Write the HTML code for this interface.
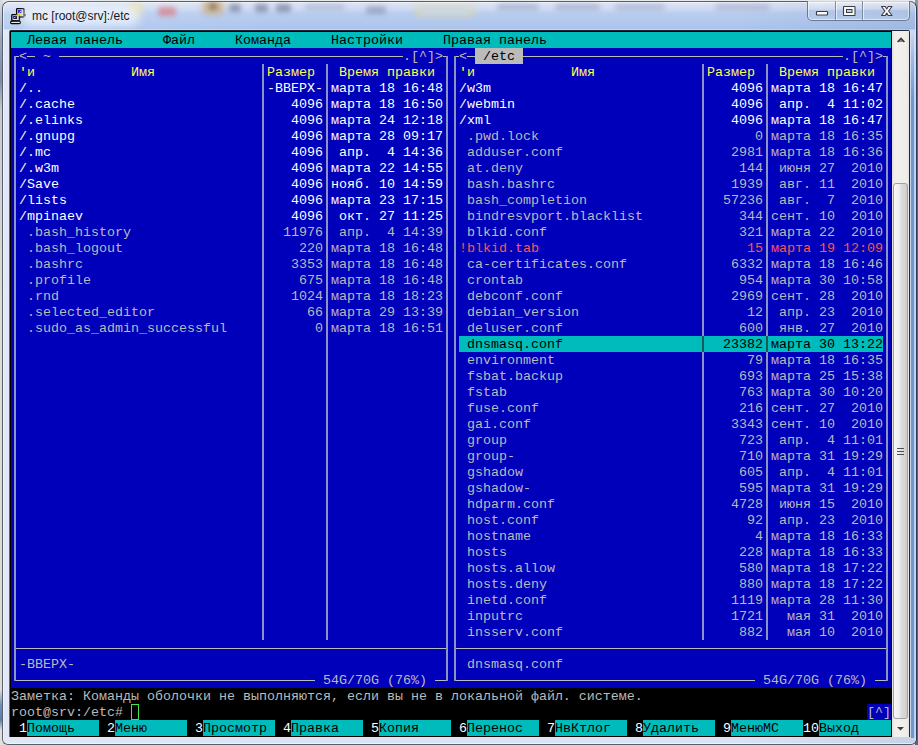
<!DOCTYPE html>
<html><head><meta charset="utf-8"><style>
html,body{margin:0;padding:0;width:918px;height:745px;overflow:hidden;position:relative;background:#e2e2da}
#bgl{position:absolute;left:0;top:0;width:3px;height:745px;background:linear-gradient(#d9dde4 0,#9aa6b8 40px,#7d8ca4 80px,#c8ccc8 110px,#dcdcd2 300px,#dcdcd2 690px,#6f8fb8 705px,#5f7fa8 720px,#e0e0d8 730px)}
#bgr{position:absolute;left:915px;top:0;width:3px;height:745px;background:linear-gradient(#8a96a8,#506890 60px,#506890)}
#bgt{position:absolute;left:0;top:0;width:918px;height:2px;background:#e6e8ec}
#win{position:absolute;left:2px;top:1px;width:913px;height:742px;border:1px solid #565f70;border-right-color:#2a3a58;border-radius:7px 7px 6px 6px;overflow:hidden;
 background:linear-gradient(90deg,rgba(255,255,255,0.15),rgba(255,255,255,0) 30%,rgba(255,255,255,0) 80%,rgba(60,90,140,0.12)),linear-gradient(#dfe6f6 0,#d0dcf2 6px,#b9cdef 12px,#b0c8ee 22px,#aac4ec 27px,#dde6f6 28px,#dde2f8 40px,#dee3f8 700px,#dbe3f2 742px)}
#win .hl{position:absolute;left:0;top:0;right:0;bottom:0;border:1px solid rgba(255,255,255,0.55);border-radius:6px 6px 3px 3px}
#title{position:absolute;left:32px;top:8px;font-family:"Liberation Sans",sans-serif;font-size:12px;line-height:16px;color:#141828;white-space:pre}
#icon{position:absolute;left:8px;top:6px;width:20px;height:20px}
#cbar{position:absolute;left:807px;top:1px;width:101px;height:19px;border:1px solid #6a7a90;border-top:none;border-radius:0 0 5px 5px;overflow:hidden;
 background:linear-gradient(rgba(255,255,255,0.45),rgba(255,255,255,0.15) 45%,rgba(160,185,220,0.25) 50%,rgba(200,220,245,0.4));box-shadow:inset 0 0 0 1px rgba(255,255,255,0.5)}
#cbar .d1{position:absolute;left:27px;top:0;width:1px;height:19px;background:#7d8ca2;box-shadow:1px 0 0 rgba(255,255,255,0.6)}
#cbar .d2{position:absolute;left:54px;top:0;width:1px;height:19px;background:#7d8ca2;box-shadow:1px 0 0 rgba(255,255,255,0.6)}
#cbar svg{position:absolute;left:0;top:0}
#cborder{position:absolute;left:9px;top:30px;width:901px;height:707px;background:linear-gradient(90deg,#566868 0,#566868 1px,#202838 1px);border-radius:2px 2px 0 0}
#client{position:absolute;left:10px;top:31px;width:882px;height:706px;background:#000}
#sb{position:absolute;left:892px;top:31px;width:17px;height:706px;background:linear-gradient(90deg,#e4e2de,#f2f0ec 3px,#f0eeea 14px,#e6e4e0)}
#thumb{position:absolute;left:1px;top:152px;width:13px;height:534px;border:1px solid #a2a2a2;border-radius:3px;background:linear-gradient(90deg,#f6f6f6,#eeeeee 40%,#dcdcdc 55%,#d4d4d4 85%,#c8c8c8)}
#sb svg{position:absolute;left:0}
#term{position:absolute;left:0;top:0}
#cur{position:absolute;left:131px;top:704px;width:6px;height:14px;border:1px solid #44e844}
#frR{position:absolute;left:910px;top:30px;width:6px;height:708px;background:linear-gradient(rgba(215,225,245,0.9),rgba(215,225,245,0.5) 25px,rgba(215,225,245,0) 70px),linear-gradient(90deg,#c4d4f0 0,#c4d4f0 1px,#7898c8 1px,#7094c8 4px,#b8d0f8 4px,#c0d8ff 6px)}

.b{position:absolute;height:16px}
.l{position:absolute}
.t{position:absolute;height:16px;line-height:16px;white-space:pre;font-family:"Liberation Mono",monospace;font-size:13.333px}
</style></head><body>
<div id="bgt"></div><div id="bgl"></div><div id="bgr"></div>
<div id="win"><div class="hl"></div><div id="blobs" style="position:absolute;left:-3px;top:-1px;width:918px;height:28px;overflow:hidden"><div style="position:absolute;left:128px;top:3px;width:14px;height:10px;background:rgba(235,225,150,0.8);filter:blur(3px);border-radius:3px"></div><div style="position:absolute;left:158px;top:6px;width:18px;height:9px;background:rgba(220,120,130,0.7);filter:blur(2.5px);border-radius:3px"></div><div style="position:absolute;left:203px;top:0px;width:20px;height:13px;background:rgba(205,160,100,0.7);filter:blur(3px);border-radius:3px"></div><div style="position:absolute;left:209px;top:2px;width:8px;height:7px;background:rgba(110,110,90,0.6);filter:blur(2px);border-radius:3px"></div><div style="position:absolute;left:229px;top:3px;width:12px;height:8px;background:rgba(90,100,130,0.55);filter:blur(2.5px);border-radius:3px"></div><div style="position:absolute;left:255px;top:3px;width:13px;height:8px;background:rgba(90,100,130,0.55);filter:blur(2.5px);border-radius:3px"></div><div style="position:absolute;left:276px;top:3px;width:15px;height:8px;background:rgba(90,100,130,0.55);filter:blur(2.5px);border-radius:3px"></div><div style="position:absolute;left:305px;top:3px;width:40px;height:6px;background:rgba(130,140,170,0.35);filter:blur(2.5px);border-radius:3px"></div><div style="position:absolute;left:366px;top:5px;width:20px;height:8px;background:rgba(110,120,150,0.45);filter:blur(2.5px);border-radius:3px"></div><div style="position:absolute;left:415px;top:4px;width:60px;height:12px;background:rgba(230,215,150,0.5);filter:blur(3px);border-radius:3px"></div><div style="position:absolute;left:420px;top:7px;width:50px;height:6px;background:rgba(200,215,240,0.8);filter:blur(2px);border-radius:3px"></div><div style="position:absolute;left:497px;top:3px;width:42px;height:6px;background:rgba(120,130,170,0.4);filter:blur(2.5px);border-radius:3px"></div><div style="position:absolute;left:555px;top:3px;width:45px;height:6px;background:rgba(120,130,170,0.4);filter:blur(2.5px);border-radius:3px"></div><div style="position:absolute;left:615px;top:3px;width:50px;height:6px;background:rgba(120,130,170,0.35);filter:blur(2.5px);border-radius:3px"></div><div style="position:absolute;left:715px;top:3px;width:55px;height:6px;background:rgba(120,130,170,0.35);filter:blur(2.5px);border-radius:3px"></div></div></div>
<svg id="icon" viewBox="0 0 20 20" width="20" height="20">
 <rect x="8.6" y="2.6" width="7.4" height="8.4" rx="0.8" fill="#d4d4d4" stroke="#000" stroke-width="1.3"/>
 <rect x="10" y="4" width="3.4" height="3" fill="#1818d0"/>
 <path d="M11.5 6.5 L13 5" stroke="#fff" stroke-width="0.8"/>
 <rect x="16" y="8" width="1.8" height="2.2" fill="#000"/>
 <rect x="3.8" y="8.6" width="7.6" height="6.4" rx="0.8" fill="#d8d8d8" stroke="#000" stroke-width="1.3"/>
 <rect x="5.2" y="10" width="3.8" height="3" fill="#101060"/>
 <path d="M6 12.3 L7.5 10.8" stroke="#fff" stroke-width="0.9"/>
 <rect x="2.6" y="15.2" width="9.8" height="2.4" rx="1.2" fill="#ececec" stroke="#000" stroke-width="1.2"/>
 <path d="M8.2 9.2 L11.6 7.2 L11 8.6 L13.2 8.4 L9.6 10.8 L10.3 9.6 Z" fill="#f8f000" stroke="#d0c800" stroke-width="0.5"/>
</svg>
<div style="position:absolute;left:22px;top:6px;width:118px;height:20px;border-radius:10px;background:rgba(240,244,252,0.75);filter:blur(4px)"></div>
<div id="title">mc [root@srv]:/etc</div>
<div id="cbar"><div class="d1"></div><div class="d2"></div>
<svg width="101" height="19" viewBox="0 0 101 19">
 <rect x="8.5" y="10.5" width="11" height="3.5" fill="#fff" stroke="#3c3c46" stroke-width="1.2" rx="0.5"/>
 <rect x="35.5" y="5.5" width="11.5" height="9" fill="#f8f8f8" stroke="#3c3c46" stroke-width="1.1" rx="0.5"/>
 <rect x="38.5" y="8.5" width="5.5" height="3" fill="#c4d2e8" stroke="#3c3c46" stroke-width="1"/>
 <path d="M73.5 5.5 L77.3 5.5 L78.75 8 L80.2 5.5 L84 5.5 L80.6 10 L84 14.5 L80.2 14.5 L78.75 12 L77.3 14.5 L73.5 14.5 L76.9 10 Z" fill="#fafafa" stroke="#3c3c46" stroke-width="1.1" stroke-linejoin="round"/>
</svg></div>
<div id="frR"></div>
<div id="cborder"></div>
<div id="client"></div>
<div id="sb">
 <svg width="17" height="17" style="top:0"><path d="M5.6 11 L9 7.4 L12.4 11" fill="#888" stroke="#3a3a3a" stroke-width="1.5" stroke-linejoin="miter"/></svg>
 <div id="thumb"><div style="position:absolute;left:3px;top:264px;width:7px;height:1px;background:#505050;box-shadow:0 3px 0 #505050,0 6px 0 #505050"></div></div>
 <svg width="17" height="18" style="top:688px"><path d="M5 8 L8.5 11.5 L12 8 Z" fill="#404040"/></svg>
</div>

<div id="term">
<div class="b" style="left:11px;top:32px;width:880px;background:#00bbbb"></div>
<div class="b" style="left:11px;top:48px;width:464px;background:#0000bb"></div>
<div class="b" style="left:475px;top:48px;width:48px;background:#bbbbbb"></div>
<div class="b" style="left:523px;top:48px;width:368px;background:#0000bb"></div>
<div class="b" style="left:11px;top:64px;width:880px;background:#0000bb"></div>
<div class="b" style="left:11px;top:80px;width:880px;background:#0000bb"></div>
<div class="b" style="left:11px;top:96px;width:880px;background:#0000bb"></div>
<div class="b" style="left:11px;top:112px;width:880px;background:#0000bb"></div>
<div class="b" style="left:11px;top:128px;width:880px;background:#0000bb"></div>
<div class="b" style="left:11px;top:144px;width:880px;background:#0000bb"></div>
<div class="b" style="left:11px;top:160px;width:880px;background:#0000bb"></div>
<div class="b" style="left:11px;top:176px;width:880px;background:#0000bb"></div>
<div class="b" style="left:11px;top:192px;width:880px;background:#0000bb"></div>
<div class="b" style="left:11px;top:208px;width:880px;background:#0000bb"></div>
<div class="b" style="left:11px;top:224px;width:880px;background:#0000bb"></div>
<div class="b" style="left:11px;top:240px;width:880px;background:#0000bb"></div>
<div class="b" style="left:11px;top:256px;width:880px;background:#0000bb"></div>
<div class="b" style="left:11px;top:272px;width:880px;background:#0000bb"></div>
<div class="b" style="left:11px;top:288px;width:880px;background:#0000bb"></div>
<div class="b" style="left:11px;top:304px;width:880px;background:#0000bb"></div>
<div class="b" style="left:11px;top:320px;width:880px;background:#0000bb"></div>
<div class="b" style="left:11px;top:336px;width:448px;background:#0000bb"></div>
<div class="b" style="left:459px;top:336px;width:424px;background:#00bbbb"></div>
<div class="b" style="left:883px;top:336px;width:8px;background:#0000bb"></div>
<div class="b" style="left:11px;top:352px;width:880px;background:#0000bb"></div>
<div class="b" style="left:11px;top:368px;width:880px;background:#0000bb"></div>
<div class="b" style="left:11px;top:384px;width:880px;background:#0000bb"></div>
<div class="b" style="left:11px;top:400px;width:880px;background:#0000bb"></div>
<div class="b" style="left:11px;top:416px;width:880px;background:#0000bb"></div>
<div class="b" style="left:11px;top:432px;width:880px;background:#0000bb"></div>
<div class="b" style="left:11px;top:448px;width:880px;background:#0000bb"></div>
<div class="b" style="left:11px;top:464px;width:880px;background:#0000bb"></div>
<div class="b" style="left:11px;top:480px;width:880px;background:#0000bb"></div>
<div class="b" style="left:11px;top:496px;width:880px;background:#0000bb"></div>
<div class="b" style="left:11px;top:512px;width:880px;background:#0000bb"></div>
<div class="b" style="left:11px;top:528px;width:880px;background:#0000bb"></div>
<div class="b" style="left:11px;top:544px;width:880px;background:#0000bb"></div>
<div class="b" style="left:11px;top:560px;width:880px;background:#0000bb"></div>
<div class="b" style="left:11px;top:576px;width:880px;background:#0000bb"></div>
<div class="b" style="left:11px;top:592px;width:880px;background:#0000bb"></div>
<div class="b" style="left:11px;top:608px;width:880px;background:#0000bb"></div>
<div class="b" style="left:11px;top:624px;width:880px;background:#0000bb"></div>
<div class="b" style="left:11px;top:640px;width:880px;background:#0000bb"></div>
<div class="b" style="left:11px;top:656px;width:880px;background:#0000bb"></div>
<div class="b" style="left:11px;top:672px;width:880px;background:#0000bb"></div>
<div class="b" style="left:867px;top:704px;width:24px;background:#0000bb"></div>
<div class="b" style="left:27px;top:720px;width:72px;background:#00bbbb"></div>
<div class="b" style="left:115px;top:720px;width:72px;background:#00bbbb"></div>
<div class="b" style="left:203px;top:720px;width:72px;background:#00bbbb"></div>
<div class="b" style="left:291px;top:720px;width:72px;background:#00bbbb"></div>
<div class="b" style="left:379px;top:720px;width:72px;background:#00bbbb"></div>
<div class="b" style="left:467px;top:720px;width:72px;background:#00bbbb"></div>
<div class="b" style="left:555px;top:720px;width:72px;background:#00bbbb"></div>
<div class="b" style="left:643px;top:720px;width:72px;background:#00bbbb"></div>
<div class="b" style="left:731px;top:720px;width:72px;background:#00bbbb"></div>
<div class="b" style="left:819px;top:720px;width:72px;background:#00bbbb"></div>
<div class="l" style="left:14px;top:56px;width:5px;height:1px;background:#bbbbbb"></div>
<div class="l" style="left:27px;top:56px;width:8px;height:1px;background:#bbbbbb"></div>
<div class="l" style="left:59px;top:56px;width:344px;height:1px;background:#bbbbbb"></div>
<div class="l" style="left:443px;top:56px;width:5px;height:1px;background:#bbbbbb"></div>
<div class="l" style="left:454px;top:56px;width:5px;height:1px;background:#bbbbbb"></div>
<div class="l" style="left:467px;top:56px;width:8px;height:1px;background:#bbbbbb"></div>
<div class="l" style="left:523px;top:56px;width:320px;height:1px;background:#bbbbbb"></div>
<div class="l" style="left:883px;top:56px;width:5px;height:1px;background:#bbbbbb"></div>
<div class="l" style="left:14px;top:648px;width:434px;height:1px;background:#bbbbbb"></div>
<div class="l" style="left:454px;top:648px;width:434px;height:1px;background:#bbbbbb"></div>
<div class="l" style="left:14px;top:680px;width:301px;height:1px;background:#bbbbbb"></div>
<div class="l" style="left:435px;top:680px;width:13px;height:1px;background:#bbbbbb"></div>
<div class="l" style="left:454px;top:680px;width:301px;height:1px;background:#bbbbbb"></div>
<div class="l" style="left:875px;top:680px;width:13px;height:1px;background:#bbbbbb"></div>
<div class="l" style="left:14px;top:56px;width:2px;height:625px;background:#8a94c4"></div>
<div class="l" style="left:446px;top:56px;width:2px;height:625px;background:#8a94c4"></div>
<div class="l" style="left:454px;top:56px;width:2px;height:625px;background:#8a94c4"></div>
<div class="l" style="left:886px;top:56px;width:2px;height:625px;background:#8a94c4"></div>
<div class="l" style="left:262px;top:64px;width:2px;height:576px;background:#8a94c4"></div>
<div class="l" style="left:326px;top:64px;width:2px;height:576px;background:#8a94c4"></div>
<div class="l" style="left:702px;top:64px;width:2px;height:272px;background:#8a94c4"></div>
<div class="l" style="left:702px;top:352px;width:2px;height:288px;background:#8a94c4"></div>
<div class="l" style="left:766px;top:64px;width:2px;height:272px;background:#8a94c4"></div>
<div class="l" style="left:766px;top:352px;width:2px;height:288px;background:#8a94c4"></div>
<div class="l" style="left:702px;top:336px;width:2px;height:16px;background:#1e5a5a"></div>
<div class="l" style="left:766px;top:336px;width:2px;height:16px;background:#1e5a5a"></div>
<div class="t" style="left:27px;top:33px;color:#000000">Левая панель</div>
<div class="t" style="left:163px;top:33px;color:#000000">Файл</div>
<div class="t" style="left:235px;top:33px;color:#000000">Команда</div>
<div class="t" style="left:331px;top:33px;color:#000000">Настройки</div>
<div class="t" style="left:443px;top:33px;color:#000000">Правая панель</div>
<div class="t" style="left:19px;top:49px;color:#bbbbbb">&lt;</div>
<div class="t" style="left:43px;top:49px;color:#bbbbbb">~</div>
<div class="t" style="left:403px;top:49px;color:#bbbbbb">.[^]&gt;</div>
<div class="t" style="left:459px;top:49px;color:#bbbbbb">&lt;</div>
<div class="t" style="left:483px;top:49px;color:#000000">/etc</div>
<div class="t" style="left:843px;top:49px;color:#bbbbbb">.[^]&gt;</div>
<div class="t" style="left:19px;top:65px;color:#ffff55">&#x27;и</div>
<div class="t" style="left:131px;top:65px;color:#ffff55">Имя</div>
<div class="t" style="left:267px;top:65px;color:#ffff55">Размер</div>
<div class="t" style="left:339px;top:65px;color:#ffff55">Время правки</div>
<div class="t" style="left:459px;top:65px;color:#ffff55">&#x27;и</div>
<div class="t" style="left:571px;top:65px;color:#ffff55">Имя</div>
<div class="t" style="left:707px;top:65px;color:#ffff55">Размер</div>
<div class="t" style="left:779px;top:65px;color:#ffff55">Время правки</div>
<div class="t" style="left:19px;top:81px;color:#ffffff">/..</div>
<div class="t" style="left:267px;top:81px;color:#ffffff">-ВВЕРХ-</div>
<div class="t" style="left:331px;top:81px;color:#ffffff">марта 18 16:48</div>
<div class="t" style="left:459px;top:81px;color:#ffffff">/w3m</div>
<div class="t" style="left:731px;top:81px;color:#ffffff">4096</div>
<div class="t" style="left:771px;top:81px;color:#ffffff">марта 18 16:47</div>
<div class="t" style="left:19px;top:97px;color:#ffffff">/.cache</div>
<div class="t" style="left:291px;top:97px;color:#ffffff">4096</div>
<div class="t" style="left:331px;top:97px;color:#ffffff">марта 18 16:50</div>
<div class="t" style="left:459px;top:97px;color:#ffffff">/webmin</div>
<div class="t" style="left:731px;top:97px;color:#ffffff">4096</div>
<div class="t" style="left:779px;top:97px;color:#ffffff">апр.</div>
<div class="t" style="left:827px;top:97px;color:#ffffff">4 11:02</div>
<div class="t" style="left:19px;top:113px;color:#ffffff">/.elinks</div>
<div class="t" style="left:291px;top:113px;color:#ffffff">4096</div>
<div class="t" style="left:331px;top:113px;color:#ffffff">марта 24 12:18</div>
<div class="t" style="left:459px;top:113px;color:#ffffff">/xml</div>
<div class="t" style="left:731px;top:113px;color:#ffffff">4096</div>
<div class="t" style="left:771px;top:113px;color:#ffffff">марта 18 16:47</div>
<div class="t" style="left:19px;top:129px;color:#ffffff">/.gnupg</div>
<div class="t" style="left:291px;top:129px;color:#ffffff">4096</div>
<div class="t" style="left:331px;top:129px;color:#ffffff">марта 28 09:17</div>
<div class="t" style="left:467px;top:129px;color:#bbbbbb">.pwd.lock</div>
<div class="t" style="left:755px;top:129px;color:#bbbbbb">0 марта 18 16:35</div>
<div class="t" style="left:19px;top:145px;color:#ffffff">/.mc</div>
<div class="t" style="left:291px;top:145px;color:#ffffff">4096</div>
<div class="t" style="left:339px;top:145px;color:#ffffff">апр.</div>
<div class="t" style="left:387px;top:145px;color:#ffffff">4 14:36</div>
<div class="t" style="left:467px;top:145px;color:#bbbbbb">adduser.conf</div>
<div class="t" style="left:731px;top:145px;color:#bbbbbb">2981 марта 18 16:36</div>
<div class="t" style="left:19px;top:161px;color:#ffffff">/.w3m</div>
<div class="t" style="left:291px;top:161px;color:#ffffff">4096</div>
<div class="t" style="left:331px;top:161px;color:#ffffff">марта 22 14:55</div>
<div class="t" style="left:467px;top:161px;color:#bbbbbb">at.deny</div>
<div class="t" style="left:739px;top:161px;color:#bbbbbb">144</div>
<div class="t" style="left:779px;top:161px;color:#bbbbbb">июня 27</div>
<div class="t" style="left:851px;top:161px;color:#bbbbbb">2010</div>
<div class="t" style="left:19px;top:177px;color:#ffffff">/Save</div>
<div class="t" style="left:291px;top:177px;color:#ffffff">4096</div>
<div class="t" style="left:331px;top:177px;color:#ffffff">нояб. 10 14:59</div>
<div class="t" style="left:467px;top:177px;color:#bbbbbb">bash.bashrc</div>
<div class="t" style="left:731px;top:177px;color:#bbbbbb">1939</div>
<div class="t" style="left:779px;top:177px;color:#bbbbbb">авг. 11</div>
<div class="t" style="left:851px;top:177px;color:#bbbbbb">2010</div>
<div class="t" style="left:19px;top:193px;color:#ffffff">/lists</div>
<div class="t" style="left:291px;top:193px;color:#ffffff">4096</div>
<div class="t" style="left:331px;top:193px;color:#ffffff">марта 23 17:15</div>
<div class="t" style="left:467px;top:193px;color:#bbbbbb">bash_completion</div>
<div class="t" style="left:723px;top:193px;color:#bbbbbb">57236</div>
<div class="t" style="left:779px;top:193px;color:#bbbbbb">авг.</div>
<div class="t" style="left:827px;top:193px;color:#bbbbbb">7</div>
<div class="t" style="left:851px;top:193px;color:#bbbbbb">2010</div>
<div class="t" style="left:19px;top:209px;color:#ffffff">/mpinaev</div>
<div class="t" style="left:291px;top:209px;color:#ffffff">4096</div>
<div class="t" style="left:339px;top:209px;color:#ffffff">окт. 27 11:25</div>
<div class="t" style="left:467px;top:209px;color:#bbbbbb">bindresvport.blacklist</div>
<div class="t" style="left:739px;top:209px;color:#bbbbbb">344 сент. 10</div>
<div class="t" style="left:851px;top:209px;color:#bbbbbb">2010</div>
<div class="t" style="left:27px;top:225px;color:#bbbbbb">.bash_history</div>
<div class="t" style="left:283px;top:225px;color:#bbbbbb">11976</div>
<div class="t" style="left:339px;top:225px;color:#bbbbbb">апр.</div>
<div class="t" style="left:387px;top:225px;color:#bbbbbb">4 14:39</div>
<div class="t" style="left:467px;top:225px;color:#bbbbbb">blkid.conf</div>
<div class="t" style="left:739px;top:225px;color:#bbbbbb">321 марта 22</div>
<div class="t" style="left:851px;top:225px;color:#bbbbbb">2010</div>
<div class="t" style="left:27px;top:241px;color:#bbbbbb">.bash_logout</div>
<div class="t" style="left:299px;top:241px;color:#bbbbbb">220 марта 18 16:48</div>
<div class="t" style="left:459px;top:241px;color:#ff5555">!blkid.tab</div>
<div class="t" style="left:747px;top:241px;color:#ff5555">15</div>
<div class="t" style="left:771px;top:241px;color:#ff5555">марта 19 12:09</div>
<div class="t" style="left:27px;top:257px;color:#bbbbbb">.bashrc</div>
<div class="t" style="left:291px;top:257px;color:#bbbbbb">3353 марта 18 16:48</div>
<div class="t" style="left:467px;top:257px;color:#bbbbbb">ca-certificates.conf</div>
<div class="t" style="left:731px;top:257px;color:#bbbbbb">6332 марта 18 16:46</div>
<div class="t" style="left:27px;top:273px;color:#bbbbbb">.profile</div>
<div class="t" style="left:299px;top:273px;color:#bbbbbb">675 марта 18 16:48</div>
<div class="t" style="left:467px;top:273px;color:#bbbbbb">crontab</div>
<div class="t" style="left:739px;top:273px;color:#bbbbbb">954 марта 30 10:58</div>
<div class="t" style="left:27px;top:289px;color:#bbbbbb">.rnd</div>
<div class="t" style="left:291px;top:289px;color:#bbbbbb">1024 марта 18 18:23</div>
<div class="t" style="left:467px;top:289px;color:#bbbbbb">debconf.conf</div>
<div class="t" style="left:731px;top:289px;color:#bbbbbb">2969 сент. 28</div>
<div class="t" style="left:851px;top:289px;color:#bbbbbb">2010</div>
<div class="t" style="left:27px;top:305px;color:#bbbbbb">.selected_editor</div>
<div class="t" style="left:307px;top:305px;color:#bbbbbb">66 марта 29 13:39</div>
<div class="t" style="left:467px;top:305px;color:#bbbbbb">debian_version</div>
<div class="t" style="left:747px;top:305px;color:#bbbbbb">12</div>
<div class="t" style="left:779px;top:305px;color:#bbbbbb">апр. 23</div>
<div class="t" style="left:851px;top:305px;color:#bbbbbb">2010</div>
<div class="t" style="left:27px;top:321px;color:#bbbbbb">.sudo_as_admin_successful</div>
<div class="t" style="left:315px;top:321px;color:#bbbbbb">0 марта 18 16:51</div>
<div class="t" style="left:467px;top:321px;color:#bbbbbb">deluser.conf</div>
<div class="t" style="left:739px;top:321px;color:#bbbbbb">600</div>
<div class="t" style="left:779px;top:321px;color:#bbbbbb">янв. 27</div>
<div class="t" style="left:851px;top:321px;color:#bbbbbb">2010</div>
<div class="t" style="left:467px;top:337px;color:#000000">dnsmasq.conf</div>
<div class="t" style="left:723px;top:337px;color:#000000">23382 марта 30 13:22</div>
<div class="t" style="left:467px;top:353px;color:#bbbbbb">environment</div>
<div class="t" style="left:747px;top:353px;color:#bbbbbb">79 марта 18 16:35</div>
<div class="t" style="left:467px;top:369px;color:#bbbbbb">fsbat.backup</div>
<div class="t" style="left:739px;top:369px;color:#bbbbbb">693 марта 25 15:38</div>
<div class="t" style="left:467px;top:385px;color:#bbbbbb">fstab</div>
<div class="t" style="left:739px;top:385px;color:#bbbbbb">763 марта 30 10:20</div>
<div class="t" style="left:467px;top:401px;color:#bbbbbb">fuse.conf</div>
<div class="t" style="left:739px;top:401px;color:#bbbbbb">216 сент. 27</div>
<div class="t" style="left:851px;top:401px;color:#bbbbbb">2010</div>
<div class="t" style="left:467px;top:417px;color:#bbbbbb">gai.conf</div>
<div class="t" style="left:731px;top:417px;color:#bbbbbb">3343 сент. 10</div>
<div class="t" style="left:851px;top:417px;color:#bbbbbb">2010</div>
<div class="t" style="left:467px;top:433px;color:#bbbbbb">group</div>
<div class="t" style="left:739px;top:433px;color:#bbbbbb">723</div>
<div class="t" style="left:779px;top:433px;color:#bbbbbb">апр.</div>
<div class="t" style="left:827px;top:433px;color:#bbbbbb">4 11:01</div>
<div class="t" style="left:467px;top:449px;color:#bbbbbb">group-</div>
<div class="t" style="left:739px;top:449px;color:#bbbbbb">710 марта 31 19:29</div>
<div class="t" style="left:467px;top:465px;color:#bbbbbb">gshadow</div>
<div class="t" style="left:739px;top:465px;color:#bbbbbb">605</div>
<div class="t" style="left:779px;top:465px;color:#bbbbbb">апр.</div>
<div class="t" style="left:827px;top:465px;color:#bbbbbb">4 11:01</div>
<div class="t" style="left:467px;top:481px;color:#bbbbbb">gshadow-</div>
<div class="t" style="left:739px;top:481px;color:#bbbbbb">595 марта 31 19:29</div>
<div class="t" style="left:467px;top:497px;color:#bbbbbb">hdparm.conf</div>
<div class="t" style="left:731px;top:497px;color:#bbbbbb">4728</div>
<div class="t" style="left:779px;top:497px;color:#bbbbbb">июня 15</div>
<div class="t" style="left:851px;top:497px;color:#bbbbbb">2010</div>
<div class="t" style="left:467px;top:513px;color:#bbbbbb">host.conf</div>
<div class="t" style="left:747px;top:513px;color:#bbbbbb">92</div>
<div class="t" style="left:779px;top:513px;color:#bbbbbb">апр. 23</div>
<div class="t" style="left:851px;top:513px;color:#bbbbbb">2010</div>
<div class="t" style="left:467px;top:529px;color:#bbbbbb">hostname</div>
<div class="t" style="left:755px;top:529px;color:#bbbbbb">4 марта 18 16:33</div>
<div class="t" style="left:467px;top:545px;color:#bbbbbb">hosts</div>
<div class="t" style="left:739px;top:545px;color:#bbbbbb">228 марта 18 16:33</div>
<div class="t" style="left:467px;top:561px;color:#bbbbbb">hosts.allow</div>
<div class="t" style="left:739px;top:561px;color:#bbbbbb">580 марта 18 17:22</div>
<div class="t" style="left:467px;top:577px;color:#bbbbbb">hosts.deny</div>
<div class="t" style="left:739px;top:577px;color:#bbbbbb">880 марта 18 17:22</div>
<div class="t" style="left:467px;top:593px;color:#bbbbbb">inetd.conf</div>
<div class="t" style="left:731px;top:593px;color:#bbbbbb">1119 марта 28 11:30</div>
<div class="t" style="left:467px;top:609px;color:#bbbbbb">inputrc</div>
<div class="t" style="left:731px;top:609px;color:#bbbbbb">1721</div>
<div class="t" style="left:787px;top:609px;color:#bbbbbb">мая 31</div>
<div class="t" style="left:851px;top:609px;color:#bbbbbb">2010</div>
<div class="t" style="left:467px;top:625px;color:#bbbbbb">insserv.conf</div>
<div class="t" style="left:739px;top:625px;color:#bbbbbb">882</div>
<div class="t" style="left:787px;top:625px;color:#bbbbbb">мая 10</div>
<div class="t" style="left:851px;top:625px;color:#bbbbbb">2010</div>
<div class="t" style="left:19px;top:657px;color:#bbbbbb">-ВВЕРХ-</div>
<div class="t" style="left:467px;top:657px;color:#bbbbbb">dnsmasq.conf</div>
<div class="t" style="left:323px;top:673px;color:#bbbbbb">54G/70G (76%)</div>
<div class="t" style="left:763px;top:673px;color:#bbbbbb">54G/70G (76%)</div>
<div class="t" style="left:11px;top:689px;color:#bbbbbb">Заметка: Команды оболочки не выполняются, если вы не в локальной файл. системе.</div>
<div class="t" style="left:11px;top:705px;color:#bbbbbb">root@srv:/etc#</div>
<div class="t" style="left:867px;top:705px;color:#bbbbbb">[^]</div>
<div class="t" style="left:19px;top:721px;color:#ffffff">1</div>
<div class="t" style="left:27px;top:721px;color:#000000">Помощь</div>
<div class="t" style="left:107px;top:721px;color:#ffffff">2</div>
<div class="t" style="left:115px;top:721px;color:#000000">Меню</div>
<div class="t" style="left:195px;top:721px;color:#ffffff">3</div>
<div class="t" style="left:203px;top:721px;color:#000000">Просмотр</div>
<div class="t" style="left:283px;top:721px;color:#ffffff">4</div>
<div class="t" style="left:291px;top:721px;color:#000000">Правка</div>
<div class="t" style="left:371px;top:721px;color:#ffffff">5</div>
<div class="t" style="left:379px;top:721px;color:#000000">Копия</div>
<div class="t" style="left:459px;top:721px;color:#ffffff">6</div>
<div class="t" style="left:467px;top:721px;color:#000000">Перенос</div>
<div class="t" style="left:547px;top:721px;color:#ffffff">7</div>
<div class="t" style="left:555px;top:721px;color:#000000">НвКтлог</div>
<div class="t" style="left:635px;top:721px;color:#ffffff">8</div>
<div class="t" style="left:643px;top:721px;color:#000000">Удалить</div>
<div class="t" style="left:723px;top:721px;color:#ffffff">9</div>
<div class="t" style="left:731px;top:721px;color:#000000">МенюMC</div>
<div class="t" style="left:803px;top:721px;color:#ffffff">10</div>
<div class="t" style="left:819px;top:721px;color:#000000">Выход</div>
<div id="cur"></div>
</div>
</body></html>
